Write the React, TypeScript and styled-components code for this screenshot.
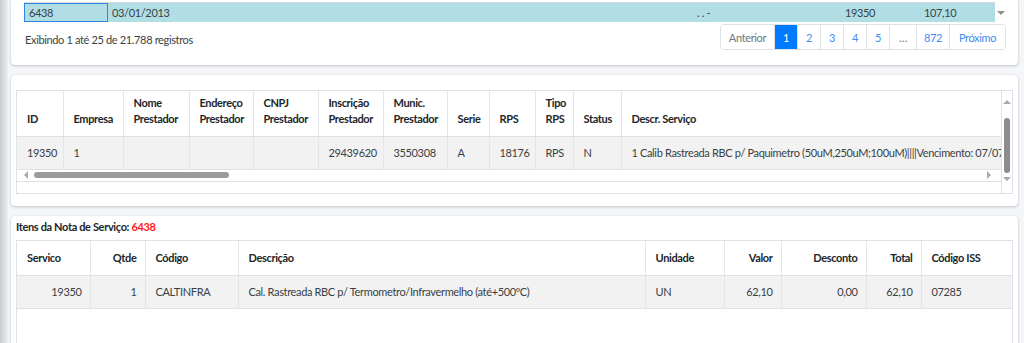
import React, { FC } from "react";
import styled, { createGlobalStyle } from "styled-components";

const GlobalStyle = createGlobalStyle`
  html, body {
    margin: 0;
    padding: 0;
    background: #f4f6f9;
    font-family: Lato, "Liberation Sans", sans-serif;
    font-size: 11px;
    letter-spacing: -0.35px;
    color: #212529;
    overflow: hidden;
  }
`;

const Page = styled.div`
  display: flex;
  height: 343px;
  overflow: hidden;
`;

const SideShadow = styled.div`
  width: 8px;
  flex-shrink: 0;
  background: linear-gradient(to right, #c9ccd0, #dfe1e4 60%, #eceef1);
`;

const Content = styled.div`
  flex: 1;
  display: flex;
  flex-direction: column;
  gap: 10px;
  padding: 0 6px 0 3px;
  min-width: 0;
`;

const Card = styled.div<{ $pad: string; $cut?: boolean }>`
  background: #fff;
  border-radius: ${(p) => (p.$cut ? "0 0 4px 4px" : "4px")};
  box-shadow: 0 0 1px rgba(0, 0, 0, 0.13), 0 1px 3px rgba(0, 0, 0, 0.2);
  padding: ${(p) => p.$pad};
  flex-shrink: 0;
  min-width: 0;
`;

/* ---------- top card: last row of the list + pager ---------- */

const ListBody = styled.div`
  display: flex;
`;

const SelectedRow = styled.div`
  flex: 1;
  display: grid;
  grid-template-columns: 84px 582px 150px 80px 1fr;
  height: 19px;
  border-top: 1px solid #d6dadd;
  background: #b0dee4;
  color: #3a3f44;
  line-height: 19px;
`;

const RowCell = styled.div<{ $focus?: boolean; $pl?: number }>`
  padding-left: ${(p) => p.$pl ?? 4}px;
  box-sizing: border-box;
  white-space: nowrap;
  border: ${(p) => (p.$focus ? "1px solid #2f86e0" : "none")};
  line-height: ${(p) => (p.$focus ? "17px" : "19px")};
`;

const ScrollColumn = styled.div<{ $w: number; $line?: boolean }>`
  width: ${(p) => p.$w}px;
  flex-shrink: 0;
  display: flex;
  flex-direction: column;
  align-items: center;
  box-sizing: border-box;
  border-left: ${(p) => (p.$line ? "1px solid #dee2e6" : "none")};
`;

const ArrowGap = styled.div`
  height: 8px;
`;

const Footer = styled.div`
  display: flex;
  justify-content: space-between;
  align-items: center;
  padding: 2px 0 15px;
`;

const InfoText = styled.div`
  color: #3a3f44;
  padding: 5px 0 0 1px;
`;

const Pager = styled.div`
  display: flex;
  border: 1px solid #dee2e6;
  border-radius: 4px;
  overflow: hidden;
  height: 24px;
`;

const PageItem = styled.div<{ $w: number; $active?: boolean; $muted?: boolean }>`
  width: ${(p) => p.$w}px;
  display: flex;
  align-items: center;
  justify-content: center;
  border-left: 1px solid #dee2e6;
  background: ${(p) => (p.$active ? "#007bff" : "#fff")};
  color: ${(p) => (p.$active ? "#fff" : p.$muted ? "#6c757d" : "#3d8cf0")};
  &:first-child {
    border-left: none;
  }
`;

/* ---------- tables ---------- */

const Frame = styled.div<{ $h: number }>`
  display: flex;
  height: ${(p) => p.$h}px;
  border: 1px solid #dee2e6;
  box-sizing: border-box;
  overflow: hidden;
`;

const Viewport = styled.div`
  flex: 1;
  min-width: 0;
  overflow: hidden;
  display: flex;
  flex-direction: column;
`;

const Grid = styled.table<{ $tw: number }>`
  width: ${(p) => p.$tw}px;
  flex-shrink: 0;
  border-collapse: collapse;
  table-layout: fixed;
  white-space: nowrap;
`;

const Th = styled.th<{ $w: number; $right?: boolean; $h: number }>`
  width: ${(p) => p.$w}px;
  height: ${(p) => p.$h}px;
  box-sizing: border-box;
  padding: 0 8px 0 10px;
  text-align: ${(p) => (p.$right ? "right" : "left")};
  vertical-align: bottom;
  font-weight: 700;
  color: #212529;
  line-height: 16px;
  border-left: 1px solid #e3e6e9;
  border-bottom: 1px solid #dee2e6;
  white-space: normal;
  &:first-child {
    border-left: none;
  }
`;

const HeadText = styled.div<{ $pb: number }>`
  padding-bottom: ${(p) => p.$pb}px;
`;

const Td = styled.td<{ $right?: boolean }>`
  height: 33px;
  box-sizing: border-box;
  padding: 0 8px 0 10px;
  text-align: ${(p) => (p.$right ? "right" : "left")};
  color: #3a3f44;
  background: #f2f2f2;
  border-left: 1px solid #e3e6e9;
  border-bottom: 1px solid #dee2e6;
  overflow: hidden;
  &:first-child {
    border-left: none;
  }
`;

const HTrack = styled.div`
  height: 11px;
  display: flex;
  align-items: center;
  gap: 5px;
  padding: 0 9px 0 6px;
  border-bottom: 1px solid #dee2e6;
`;

const HThumb = styled.div`
  width: 195px;
  height: 6px;
  border-radius: 3px;
  background: #9b9b9b;
`;

const Spacer = styled.div`
  flex: 1;
`;

const VThumb = styled.div`
  width: 6px;
  height: 55px;
  border-radius: 3px;
  background: #8c8c8c;
  margin: 13px 0 3px;
`;

const Title = styled.div`
  font-weight: 700;
  color: #212529;
  line-height: 16px;
  margin-bottom: 5px;
`;

const Red = styled.span`
  color: #ff1a1a;
`;

const Arrow: FC<{ dir: "up" | "down" | "left" | "right"; color?: string }> = ({ dir, color = "#a8a8a8" }) => {
  const pts = {
    up: "0,5 8,5 4,1",
    down: "0,1 8,1 4,5",
    left: "5,0 5,8 1,4",
    right: "1,0 1,8 5,4",
  }[dir];
  const horiz = dir === "left" || dir === "right";
  return (
    <svg width={horiz ? 6 : 8} height={horiz ? 8 : 6} viewBox={horiz ? "0 0 6 8" : "0 0 8 6"}>
      <polygon points={pts} fill={color} />
    </svg>
  );
};

interface Col {
  label: string;
  w: number;
  right?: boolean;
}

const notaCols: Col[] = [
  { label: "ID", w: 46 },
  { label: "Empresa", w: 60 },
  { label: "Nome Prestador", w: 66 },
  { label: "Endereço Prestador", w: 64 },
  { label: "CNPJ Prestador", w: 65 },
  { label: "Inscrição Prestador", w: 65 },
  { label: "Munic. Prestador", w: 64 },
  { label: "Serie", w: 42 },
  { label: "RPS", w: 46 },
  { label: "Tipo RPS", w: 38 },
  { label: "Status", w: 48 },
  { label: "Descr. Serviço", w: 520 },
];

const notaRow = [
  "19350",
  "1",
  "",
  "",
  "",
  "29439620",
  "3550308",
  "A",
  "18176",
  "RPS",
  "N",
  "1 Calib Rastreada RBC p/ Paquimetro (50uM,250uM;100uM)||||Vencimento: 07/07/2013",
];

const itemCols: Col[] = [
  { label: "Servico", w: 73 },
  { label: "Qtde", w: 55, right: true },
  { label: "Código", w: 93 },
  { label: "Descrição", w: 407 },
  { label: "Unidade", w: 79 },
  { label: "Valor", w: 57, right: true },
  { label: "Desconto", w: 85, right: true },
  { label: "Total", w: 55, right: true },
  { label: "Código ISS", w: 93 },
];

const itemRow: { v: string; right?: boolean }[] = [
  { v: "19350", right: true },
  { v: "1", right: true },
  { v: "CALTINFRA" },
  { v: "Cal. Rastreada RBC p/ Termometro/Infravermelho (até+500ºC)" },
  { v: "UN" },
  { v: "62,10", right: true },
  { v: "0,00", right: true },
  { v: "62,10", right: true },
  { v: "07285" },
];

const pages = [
  { label: "Anterior", w: 53, muted: true },
  { label: "1", w: 22, active: true },
  { label: "2", w: 22 },
  { label: "3", w: 22 },
  { label: "4", w: 22 },
  { label: "5", w: 22 },
  { label: "…", w: 26, muted: true },
  { label: "872", w: 32 },
  { label: "Próximo", w: 55 },
];

const sum = (cols: Col[]) => cols.reduce((t, c) => t + c.w, 0);

export default function App() {
  return (
    <>
      <GlobalStyle />
      <Page>
        <SideShadow />
        <Content>
          <Card $pad="2px 12px 0 13px" $cut>
            <ListBody>
              <SelectedRow>
                <RowCell $focus>6438</RowCell>
                <RowCell>03/01/2013</RowCell>
                <RowCell $pl={7}>. . -</RowCell>
                <RowCell $pl={5}>19350</RowCell>
                <RowCell>107,10</RowCell>
              </SelectedRow>
              <ScrollColumn $w={11}>
                <ArrowGap />
                <Arrow dir="down" color="#8f8f8f" />
              </ScrollColumn>
            </ListBody>
            <Footer>
              <InfoText>Exibindo 1 até 25 de 21.788 registros</InfoText>
              <Pager>
                {pages.map((p) => (
                  <PageItem key={p.label} $w={p.w} $active={p.active} $muted={p.muted}>
                    {p.label}
                  </PageItem>
                ))}
              </Pager>
            </Footer>
          </Card>

          <Card $pad="15px 5px 12px">
            <Frame $h={104}>
              <Viewport>
                <Grid $tw={sum(notaCols)}>
                  <thead>
                    <tr>
                      {notaCols.map((c) => (
                        <Th key={c.label} $w={c.w} $h={45}>
                          <HeadText $pb={9}>{c.label}</HeadText>
                        </Th>
                      ))}
                    </tr>
                  </thead>
                  <tbody>
                    <tr>
                      {notaRow.map((v, i) => (
                        <Td key={i}>{v}</Td>
                      ))}
                    </tr>
                  </tbody>
                </Grid>
                <HTrack>
                  <Arrow dir="left" />
                  <HThumb />
                  <Spacer />
                  <Arrow dir="right" />
                </HTrack>
              </Viewport>
              <ScrollColumn $w={11} $line>
                <ArrowGap />
                <Arrow dir="up" />
                <VThumb />
                <Arrow dir="down" />
              </ScrollColumn>
            </Frame>
          </Card>

          <Card $pad="3px 5px 0">
            <Title>
              Itens da Nota de Serviço: <Red>6438</Red>
            </Title>
            <Frame $h={110}>
              <Viewport>
                <Grid $tw={sum(itemCols)}>
                  <thead>
                    <tr>
                      {itemCols.map((c) => (
                        <Th key={c.label} $w={c.w} $right={c.right} $h={34}>
                          <HeadText $pb={9}>{c.label}</HeadText>
                        </Th>
                      ))}
                    </tr>
                  </thead>
                  <tbody>
                    <tr>
                      {itemRow.map((c, i) => (
                        <Td key={i} $right={c.right}>
                          {c.v}
                        </Td>
                      ))}
                    </tr>
                  </tbody>
                </Grid>
              </Viewport>
            </Frame>
          </Card>
        </Content>
      </Page>
    </>
  );
}
